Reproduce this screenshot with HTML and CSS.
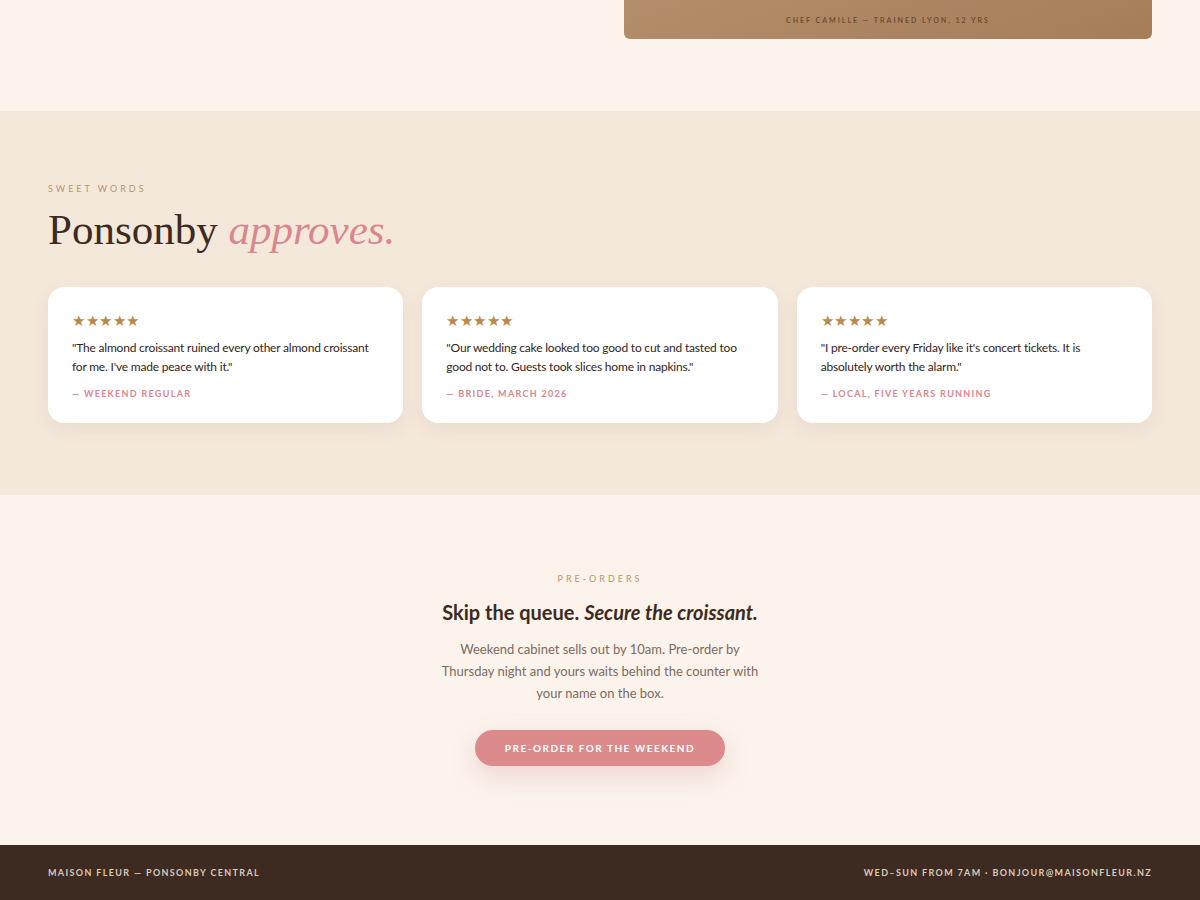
FILE: index.html
```html
<!DOCTYPE html>
<html lang="en">
<head>
  <meta charset="UTF-8" />
  <title>Maison Fleur - Ponsonby</title>
  <link rel="stylesheet" href="styles.css">
</head>
<body>

  <!-- end of the chef section -->
  <section class="chef">
    <div class="wrap chef-row">
      <div class="chef-photo">
        <span class="chef-caption">Chef Camille — trained Lyon, 12 yrs</span>
      </div>
    </div>
  </section>

  <!-- testimonials -->
  <section class="words">
    <div class="wrap">
      <p class="eyebrow">Sweet words</p>
      <h2 class="big-title">Ponsonby <em>approves.</em></h2>

      <div class="cards">
        <div class="card">
          <div class="stars">★★★★★</div>
          <p class="quote">"The almond croissant ruined every other almond croissant for me. I've made peace with it."</p>
          <p class="who">— Weekend regular</p>
        </div>
        <div class="card">
          <div class="stars">★★★★★</div>
          <p class="quote">"Our wedding cake looked too good to cut and tasted too good not to. Guests took slices home in napkins."</p>
          <p class="who">— Bride, March 2026</p>
        </div>
        <div class="card">
          <div class="stars">★★★★★</div>
          <p class="quote">"I pre-order every Friday like it's concert tickets. It is absolutely worth the alarm."</p>
          <p class="who">— Local, five years running</p>
        </div>
      </div>
    </div>
  </section>

  <!-- pre-orders -->
  <section class="preorder">
    <p class="eyebrow">Pre-orders</p>
    <h3 class="cta-title">Skip the queue. <em>Secure the croissant.</em></h3>
    <p class="cta-text">Weekend cabinet sells out by 10am. Pre-order by Thursday night and yours waits behind the counter with your name on the box.</p>
    <a href="#" class="btn">Pre-order for the weekend</a>
  </section>

  <footer class="foot">
    <div class="wrap foot-row">
      <span>Maison Fleur — Ponsonby Central</span>
      <span>Wed–Sun from 7am · bonjour@maisonfleur.nz</span>
    </div>
  </footer>

</body>
</html>
```

FILE: styles.css
```css
body {
  margin: 0;
  font-family: 'Lato', 'Noto Sans', sans-serif;
  background-color: #fbf3ec;
  color: #3d2a21;
}
.wrap {
  max-width: 1104px;
  margin: 0 auto;
  padding: 0 48px;
}

/* chef photo tail */
.chef {
  padding-bottom: 72px;
}
.chef-row {
  display: flex;
  justify-content: flex-end;
}
.chef-photo {
  width: 528px;
  height: 39px;
  border-radius: 0 0 6px 6px;
  background: linear-gradient(160deg, #b48e6a, #a77c59);
  display: flex;
  align-items: center;
  justify-content: center;
}
.chef-caption {
  font-size: 7px;
  font-weight: 700;
  letter-spacing: 2px;
  text-transform: uppercase;
  color: #6e4d35;
}

/* testimonials */
.words {
  background-color: #f4e8da;
  padding: 72px 0;
}
.eyebrow {
  margin: 0;
  font-size: 9px;
  letter-spacing: 3px;
  text-transform: uppercase;
  color: #b8956a;
}
.big-title {
  margin: 12px 0 34px;
  font-family: 'Liberation Serif', 'DejaVu Serif', serif;
  font-weight: 400;
  font-size: 43px;
  line-height: 1.1;
  color: #3d2a21;
}
.big-title em {
  color: #d9868d;
}
.cards {
  display: grid;
  grid-template-columns: repeat(3, 1fr);
  gap: 19px;
}
.card {
  background: white;
  border-radius: 16px;
  padding: 25px 24px 23px;
  box-shadow: 0 6px 18px rgba(120, 80, 50, 0.08);
}
.stars {
  font-size: 15px;
  letter-spacing: 0.5px;
  color: #b8894f;
  line-height: 16px;
}
.quote {
  margin: 10px 0 12px;
  font-size: 12px;
  letter-spacing: -0.2px;
  line-height: 19px;
  color: #33231b;
}
.who {
  margin: 0;
  font-size: 9px;
  line-height: 12px;
  font-weight: 700;
  letter-spacing: 1.3px;
  text-transform: uppercase;
  color: #d9868d;
}

/* pre-orders */
.preorder {
  text-align: center;
  padding: 78px 0 79px;
}
.cta-title {
  margin: 16px 0 14px;
  font-size: 20px;
  font-weight: 700;
  color: #3d2a21;
}
.cta-text {
  width: 322px;
  margin: 0 auto 26px;
  font-size: 13px;
  line-height: 22px;
  color: #7d6b5e;
}
.btn {
  display: inline-block;
  padding: 0 30px;
  height: 36px;
  line-height: 36px;
  border-radius: 18px;
  background-color: #dc8a8c;
  color: white;
  font-size: 10px;
  font-weight: 700;
  letter-spacing: 1.5px;
  text-transform: uppercase;
  text-decoration: none;
  box-shadow: 0 10px 24px rgba(220, 138, 140, 0.28);
}

/* footer */
.foot {
  background-color: #3d2a21;
  color: #d9c9b9;
  font-size: 9px;
  font-weight: 700;
  letter-spacing: 1.35px;
  text-transform: uppercase;
}
.foot-row {
  height: 55px;
  display: flex;
  align-items: center;
  justify-content: space-between;
}
```
